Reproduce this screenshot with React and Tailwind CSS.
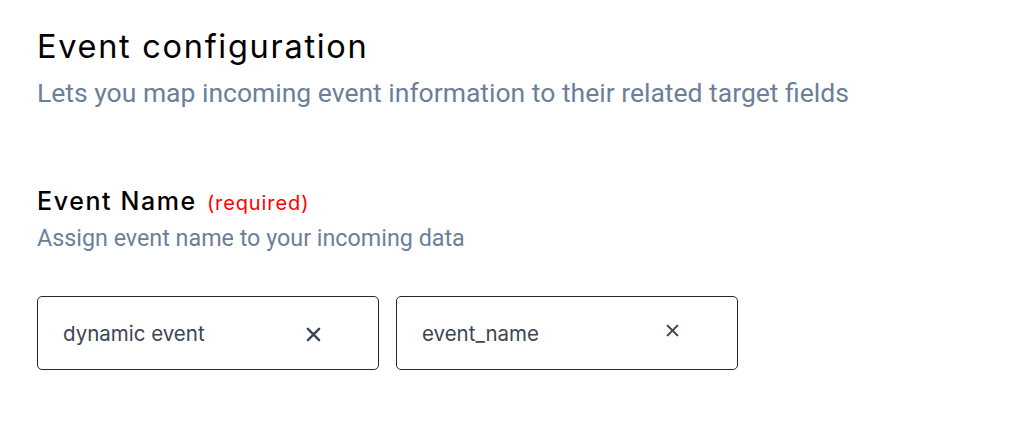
import React from "react";

const CloseIcon = ({ className }) => (
  <svg
    className={className}
    viewBox="0 0 16 16"
    fill="none"
    stroke="currentColor"
    strokeWidth="2.6"
    strokeLinecap="round"
  >
    <path d="M2 2l12 12M14 2L2 14" />
  </svg>
);

const Chip = ({ label, icon }) => (
  <div className="flex h-[74px] w-[342px] items-center justify-between rounded-[5px] border border-[#1f2937] pl-[25px] pr-[57px]">
    <span className="pt-[3px] font-['Inter',sans-serif] text-[20.5px] text-[#3b4554]">
      {label}
    </span>
    <button className="text-[#3b4554]">{icon}</button>
  </div>
);

const App = () => {
  return (
    <div className="min-h-[422px] w-[1024px] bg-white pl-[37px] pt-[27px]">
      <h1 className="font-['Inter',sans-serif] text-[32.5px] leading-[40px] tracking-[1.7px] text-black">
        Event configuration
      </h1>
      <p className="mt-[11px] font-['Roboto',sans-serif] text-[26.5px] leading-[30px] text-[#6b7f99]">
        Lets you map incoming event information to their related target fields
      </p>

      <div className="mt-[78px] flex items-baseline gap-[10px]">
        <h2 className="font-['Inter',sans-serif] text-[25px] font-medium leading-[30px] tracking-[1.6px] text-black">
          Event Name
        </h2>
        <span className="font-['Inter',sans-serif] text-[20px] tracking-[0.9px] text-[#ff0000]">
          (required)
        </span>
      </div>
      <p className="mt-[6px] font-['Roboto',sans-serif] text-[23.3px] leading-[28px] text-[#6b7f99]">
        Assign event name to your incoming data
      </p>

      <div className="mt-[44px] flex gap-[17px]">
        <Chip label="dynamic event" icon={<CloseIcon className="mt-[3px] h-[15px] w-[15px]" />} />
        <Chip label="event_name" icon={<CloseIcon className="-mt-[6px] mr-[1px] h-[13px] w-[13px]" />} />
      </div>
    </div>
  );
};

export default App;
